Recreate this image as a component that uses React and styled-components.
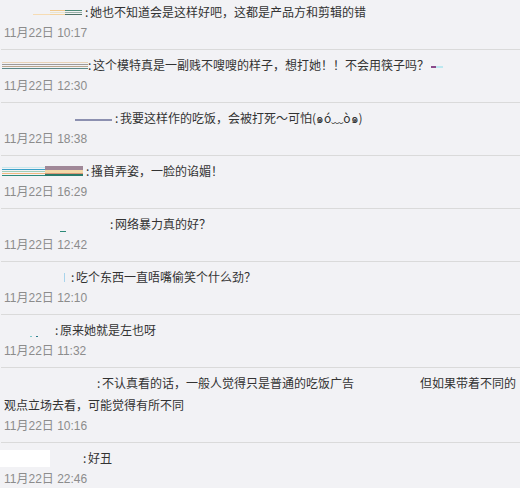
import React from "react";
import styled, { createGlobalStyle } from "styled-components";

const GlobalStyle = createGlobalStyle`
  html, body {
    margin: 0;
    padding: 0;
    background: #f2f2f5;
  }
  body {
    font-family: "Liberation Sans", "Noto Sans CJK SC", sans-serif;
    font-size: 12px;
    color: #333;
  }
`;

const List = styled.ul`
  list-style: none;
  margin: -3px 0 0 0;
  padding: 0 0 0 1px;
  width: 519px;
  overflow: hidden;
`;

const Item = styled.li`
  padding: 4px 0 6px 3px;
  border-bottom: 1px solid #dadada;
`;

const Content = styled.div`
  line-height: 22px;
  font-family: "Noto Sans CJK SC", "Liberation Sans", sans-serif;
  color: #333;
  word-break: break-all;
`;

// redacted user name: a fixed slot, marks sit inside it
const NameSlot = styled.span`
  display: inline-block;
  width: ${p => p.$w}px;
  height: 22px;
  vertical-align: top;
  position: relative;
`;

const Mark = styled.span`
  display: block;
  position: absolute;
  left: ${p => p.$x}px;
  top: ${p => p.$y}px;
  width: ${p => p.$w}px;
  height: ${p => p.$h}px;
  background: ${p => p.$bg};
`;

const Colon = styled.span`
  display: inline-block;
  width: 5px;
`;

const Gap = styled.span`
  display: inline-block;
  width: ${p => p.$w}px;
`;

const Tail = styled.span`
  display: inline-block;
  width: ${p => p.$w}px;
  height: 2px;
  margin-left: 2px;
  vertical-align: middle;
  background: ${p => p.$bg};
`;

const Time = styled.div`
  line-height: 20px;
  color: #8c8c8c;
  font-family: "Liberation Sans", "Noto Sans CJK SC", sans-serif;
  font-size: 12px;
`;

const stripes = (...cols) =>
  `linear-gradient(to bottom, ${cols
    .map((c, i) => `${c} ${i * 2}px ${i * 2 + 1}px, transparent ${i * 2 + 1}px ${i * 2 + 2}px`)
    .join(", ")})`;

const comments = [
  {
    slot: 81,
    marks: [
      { x: 29, y: 13, w: 17, h: 1, bg: "#f6dcb4" },
      { x: 46, y: 9, w: 15, h: 6, bg: stripes("#f0c990", "#eae4cc", "#f3d3a0") },
      { x: 61, y: 9, w: 17, h: 6, bg: stripes("#4e8a78", "#9ab0a8", "#4d6f66") }
    ],
    text: "她也不知道会是这样好吧，这都是产品方和剪辑的错",
    time: "11月22日 10:17"
  },
  {
    slot: 84,
    marks: [{ x: -2, y: 8, w: 86, h: 7, bg: stripes("#e8d4b8", "#9c9a9a", "#b9a58c", "#5c8a88") }],
    text: "这个模特真是一副贱不嗖嗖的样子，想打她！！不会用筷子吗？",
    tail: "linear-gradient(to right, #8a4a8a 0 5px, #bde8f0 5px)",
    time: "11月22日 12:30"
  },
  {
    slot: 111,
    marks: [{ x: 71, y: 12, w: 37, h: 2, bg: "#8c90b0" }],
    text: "我要这样作的吃饭，会被打死～可怕(๑ó﹏ò๑)",
    time: "11月22日 18:38"
  },
  {
    slot: 82,
    marks: [
      { x: -2, y: 7, w: 43, h: 9, bg: stripes("#c8e8ec", "#3aa0c8", "#9fd0b8", "#f0b880", "#2c8a7a") },
      { x: 41, y: 6, w: 38, h: 10, bg: "linear-gradient(to bottom, #a08898 0 4px, #f2d8a8 4px 7px, #d89878 7px 8px, #2a7a6a 8px 10px)" }
    ],
    text: "搔首弄姿，一脸的谄媚！",
    time: "11月22日 16:29"
  },
  {
    slot: 106,
    marks: [{ x: 56, y: 18, w: 6, h: 1, bg: "#2d8a78" }],
    text: "网络暴力真的好？",
    time: "11月22日 12:42"
  },
  {
    slot: 67,
    marks: [{ x: 60, y: 7, w: 1, h: 9, bg: "#a8d4ec" }],
    text: "吃个东西一直唔嘴偷笑个什么劲？",
    time: "11月22日 12:10"
  },
  {
    slot: 51,
    marks: [
      { x: 26, y: 17, w: 2, h: 1, bg: "#7cc8c8" },
      { x: 32, y: 17, w: 2, h: 1, bg: "#2d7a8a" }
    ],
    text: "原来她就是左也呀",
    time: "11月22日 11:32"
  },
  {
    slot: 93,
    marks: [],
    text: "不认真看的话，一般人觉得只是普通的吃饭广告",
    gap: 66,
    rest: "但如果带着不同的观点立场去看，可能觉得有所不同",
    time: "11月22日 10:16"
  },
  {
    slot: 79,
    marks: [{ x: -4, y: 3, w: 50, h: 17, bg: "#ffffff" }],
    text: "好丑",
    time: "11月22日 22:46"
  }
];

const Comment = ({ slot, marks, text, gap, rest, tail, time }) => (
  <Item>
    <Content>
      <NameSlot $w={slot}>
        {marks.map((m, i) => (
          <Mark key={i} $x={m.x} $y={m.y} $w={m.w} $h={m.h} $bg={m.bg} />
        ))}
      </NameSlot>
      <Colon>:</Colon>
      {text}
      {gap && <Gap $w={gap} />}
      {rest}
      {tail && <Tail $w={12} $bg={tail} />}
    </Content>
    <Time>{time}</Time>
  </Item>
);

export default function App() {
  return (
    <>
      <GlobalStyle />
      <List>
        {comments.map((c, i) => (
          <Comment key={i} {...c} />
        ))}
      </List>
    </>
  );
}
